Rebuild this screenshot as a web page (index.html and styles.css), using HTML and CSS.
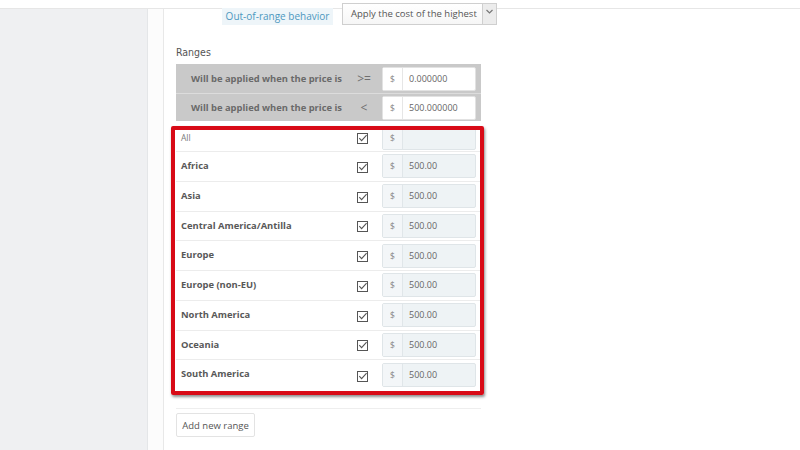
FILE: index.html
```html
<!DOCTYPE html>
<html lang="en">
<head>
<meta charset="utf-8">
<title>Ranges</title>
<link rel="stylesheet" href="styles.css">
</head>
<body>
<div class="header"></div>
<div class="layout">
  <aside class="sidebar"></aside>
  <div class="gutter"></div>
  <main class="panel">
    <div class="form">
      <div class="behavior">
        <span class="behavior-label">Out-of-range behavior</span>
        <div class="select">
          <span class="select-text">Apply the cost of the highest</span>
          <span class="select-arrow"><svg width="9" height="9" viewBox="0 0 9 9"><path d="M1.5 3 L4.5 6 L7.5 3" fill="none" stroke="#777" stroke-width="1.2"/></svg></span>
        </div>
      </div>
      <div class="ranges-title">Ranges</div>
      <div class="price-table">
        <div class="price-row">
          <span class="price-label">Will be applied when the price is</span>
          <span class="price-op">&gt;=</span>
          <div class="igroup white"><span class="addon">$</span><span class="ivalue">0.000000</span></div>
        </div>
        <div class="price-row second">
          <span class="price-label">Will be applied when the price is</span>
          <span class="price-op">&lt;</span>
          <div class="igroup white"><span class="addon">$</span><span class="ivalue">500.000000</span></div>
        </div>
      </div>
      <div class="zones">
        <div class="zone-row all">
          <span class="zone-name">All</span>
          <span class="check"><svg width="11" height="11" viewBox="0 0 11 11"><rect x="0.5" y="0.5" width="10" height="10" fill="#fff" stroke="#555"/><path d="M2.3 5.2 L4.6 7.6 L9.6 2.2" fill="none" stroke="#555" stroke-width="1.1"/></svg></span>
          <div class="igroup"><span class="addon">$</span><span class="ivalue"></span></div>
        </div>
        <div class="zone-row">
          <span class="zone-name">Africa</span>
          <span class="check"><svg width="11" height="11" viewBox="0 0 11 11"><rect x="0.5" y="0.5" width="10" height="10" fill="#fff" stroke="#555"/><path d="M2.3 5.2 L4.6 7.6 L9.6 2.2" fill="none" stroke="#555" stroke-width="1.1"/></svg></span>
          <div class="igroup"><span class="addon">$</span><span class="ivalue">500.00</span></div>
        </div>
        <div class="zone-row">
          <span class="zone-name">Asia</span>
          <span class="check"><svg width="11" height="11" viewBox="0 0 11 11"><rect x="0.5" y="0.5" width="10" height="10" fill="#fff" stroke="#555"/><path d="M2.3 5.2 L4.6 7.6 L9.6 2.2" fill="none" stroke="#555" stroke-width="1.1"/></svg></span>
          <div class="igroup"><span class="addon">$</span><span class="ivalue">500.00</span></div>
        </div>
        <div class="zone-row">
          <span class="zone-name">Central America/Antilla</span>
          <span class="check"><svg width="11" height="11" viewBox="0 0 11 11"><rect x="0.5" y="0.5" width="10" height="10" fill="#fff" stroke="#555"/><path d="M2.3 5.2 L4.6 7.6 L9.6 2.2" fill="none" stroke="#555" stroke-width="1.1"/></svg></span>
          <div class="igroup"><span class="addon">$</span><span class="ivalue">500.00</span></div>
        </div>
        <div class="zone-row">
          <span class="zone-name">Europe</span>
          <span class="check"><svg width="11" height="11" viewBox="0 0 11 11"><rect x="0.5" y="0.5" width="10" height="10" fill="#fff" stroke="#555"/><path d="M2.3 5.2 L4.6 7.6 L9.6 2.2" fill="none" stroke="#555" stroke-width="1.1"/></svg></span>
          <div class="igroup"><span class="addon">$</span><span class="ivalue">500.00</span></div>
        </div>
        <div class="zone-row">
          <span class="zone-name">Europe (non-EU)</span>
          <span class="check"><svg width="11" height="11" viewBox="0 0 11 11"><rect x="0.5" y="0.5" width="10" height="10" fill="#fff" stroke="#555"/><path d="M2.3 5.2 L4.6 7.6 L9.6 2.2" fill="none" stroke="#555" stroke-width="1.1"/></svg></span>
          <div class="igroup"><span class="addon">$</span><span class="ivalue">500.00</span></div>
        </div>
        <div class="zone-row">
          <span class="zone-name">North America</span>
          <span class="check"><svg width="11" height="11" viewBox="0 0 11 11"><rect x="0.5" y="0.5" width="10" height="10" fill="#fff" stroke="#555"/><path d="M2.3 5.2 L4.6 7.6 L9.6 2.2" fill="none" stroke="#555" stroke-width="1.1"/></svg></span>
          <div class="igroup"><span class="addon">$</span><span class="ivalue">500.00</span></div>
        </div>
        <div class="zone-row">
          <span class="zone-name">Oceania</span>
          <span class="check"><svg width="11" height="11" viewBox="0 0 11 11"><rect x="0.5" y="0.5" width="10" height="10" fill="#fff" stroke="#555"/><path d="M2.3 5.2 L4.6 7.6 L9.6 2.2" fill="none" stroke="#555" stroke-width="1.1"/></svg></span>
          <div class="igroup"><span class="addon">$</span><span class="ivalue">500.00</span></div>
        </div>
        <div class="zone-row last">
          <span class="zone-name">South America</span>
          <span class="check"><svg width="11" height="11" viewBox="0 0 11 11"><rect x="0.5" y="0.5" width="10" height="10" fill="#fff" stroke="#555"/><path d="M2.3 5.2 L4.6 7.6 L9.6 2.2" fill="none" stroke="#555" stroke-width="1.1"/></svg></span>
          <div class="igroup"><span class="addon">$</span><span class="ivalue">500.00</span></div>
        </div>
      </div>
      <div class="divider"></div>
      <button class="add-btn" type="button">Add new range</button>
    </div>
  </main>
</div>
</body>
</html>
```

FILE: styles.css
```css
* { box-sizing: border-box; }
html, body { margin: 0; padding: 0; }
body {
  width: 800px;
  height: 450px;
  overflow: hidden;
  background: #fff;
  font-family: "Open Sans", "Liberation Sans", sans-serif;
  color: #555;
}
.header {
  height: 9px;
  border-bottom: 1px solid #e6e6e6;
  background: #fff;
}
.layout {
  display: flex;
  height: 441px;
}
.sidebar {
  width: 148px;
  flex-shrink: 0;
  background: #eff0f2;
  border-right: 1px solid #e4e6e8;
}
.gutter {
  width: 15px;
  flex-shrink: 0;
  background: #fcfcfc;
}
.panel {
  flex: 1;
  border-left: 1px solid #e8e8e8;
  padding-left: 12px;
  background: #fff;
}
.form {
  width: 305px;
}
.behavior {
  display: flex;
  align-items: flex-start;
  margin-top: -6px;
  padding-left: 46px;
  height: 22px;
}
.behavior-label {
  flex-shrink: 0;
  width: 111px;
  height: 17px;
  margin-top: 5px;
  background: #eef5f9;
  color: #4d98c0;
  font-size: 10px;
  line-height: 17px;
  text-align: center;
  white-space: nowrap;
}
.select {
  flex-shrink: 0;
  margin-left: 9px;
  width: 155px;
  height: 22px;
  display: flex;
  border: 1px solid #cfcfcf;
  background: linear-gradient(#fff, #f6f6f6);
}
.select-text {
  flex: 1;
  font-size: 9.5px;
  line-height: 20px;
  padding-left: 8px;
  color: #555;
  white-space: nowrap;
  overflow: hidden;
}
.select-arrow {
  width: 14px;
  border-left: 1px solid #cfcfcf;
  background: #ececec;
  display: flex;
  justify-content: center;
  padding-top: 3px;
}
.ranges-title {
  margin-top: 19px;
  font-family: "DejaVu Sans", sans-serif;
  font-stretch: condensed;
  font-size: 10.5px;
  line-height: 16px;
  color: #555;
  height: 16px;
}
.price-table {
  margin-top: 4px;
  background: #c9c9c9;
}
.price-row {
  display: grid;
  grid-template-columns: 1fr 24px 94px;
  column-gap: 6px;
  align-items: center;
  height: 29px;
  padding-right: 5px;
}
.price-row.second {
  height: 28px;
  border-top: 1px solid #dcdcdc;
}
.price-label {
  text-align: right;
  padding-right: 4px;
  font-size: 9.4px;
  font-weight: 700;
  color: #6a6a6a;
  white-space: nowrap;
}
.price-op {
  text-align: center;
  font-size: 12px;
  color: #6f6f6f;
}
.igroup {
  display: flex;
  height: 24px;
  border: 1px solid #dfe5e8;
  border-radius: 2px;
  background: #eef3f5;
}
.igroup.white {
  background: #fff;
  border-color: #e2e2e2;
}
.addon {
  width: 20px;
  border-right: 1px solid #e0e6e9;
  background: #f3f6f8;
  color: #888;
  font-size: 8.5px;
  line-height: 22px;
  text-align: center;
}
.igroup.white .addon {
  background: #fff;
  border-right-color: #e6e6e6;
}
.ivalue {
  flex: 1;
  padding-left: 6px;
  font-size: 9px;
  line-height: 22px;
  color: #666;
}
.zones {
  position: relative;
  margin-top: 1px;
}
.zones::after {
  content: "";
  position: absolute;
  top: 4px;
  left: -5px;
  right: -3px;
  bottom: -5px;
  border: 4px solid #d80a16;
  border-radius: 2px;
  box-shadow: 1px 2px 3px rgba(0, 0, 0, 0.45);
  pointer-events: none;
}
.zone-row {
  display: grid;
  grid-template-columns: 1fr 11px 94px;
  column-gap: 14px;
  align-items: center;
  height: 29.75px;
  padding: 0 5px 0 5px;
  border-bottom: 1px solid #ececec;
}
.zone-row.all {
  height: 30px;
  align-items: end;
  padding-bottom: 1px;
}
.zone-row.all .zone-name {
  align-self: start;
  padding-top: 10px;
  font-weight: 400;
  color: #7a7a7a;
  font-size: 8.5px;
}
.zone-row.all .check {
  align-self: start;
  margin-top: 11px;
}
.zone-row.last { border-bottom: none; }
.zone-name {
  font-size: 9.4px;
  font-weight: 700;
  color: #585858;
  white-space: nowrap;
  align-self: start;
  padding-top: 7px;
}
.check {
  display: flex;
  height: 11px;
  margin-top: 2px;
}
.divider {
  margin-top: 18px;
  height: 1px;
  background: #eeeeee;
}
.add-btn {
  display: block;
  margin-top: 4px;
  height: 24px;
  width: 79px;
  padding: 0;
  border: 1px solid #e3e3e3;
  border-radius: 2px;
  background: #fff;
  font-family: "Open Sans", "Liberation Sans", sans-serif;
  font-size: 9.5px;
  color: #555;
}
```
